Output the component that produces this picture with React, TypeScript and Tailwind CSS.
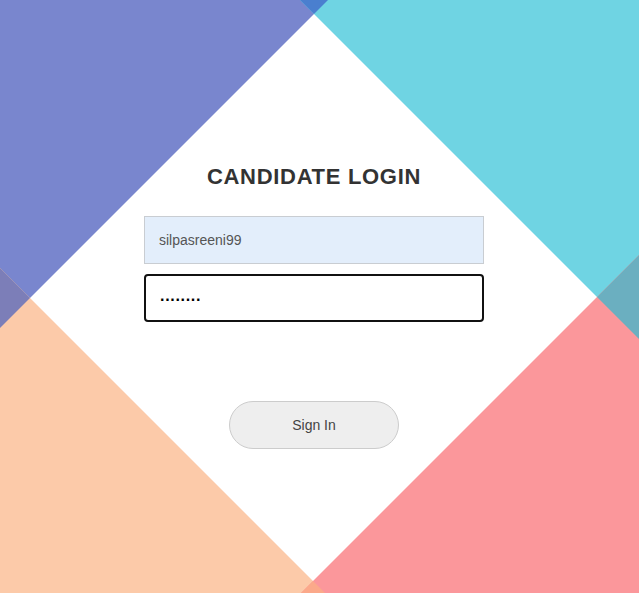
import { useState } from 'react'

function Backdrop() {
  return (
    <svg
      className="absolute inset-0"
      width="639"
      height="593"
      viewBox="0 0 639 593"
      aria-hidden
    >
      {/* corner triangles */}
      <polygon points="0,0 328,0 0,328" fill="#7986CE" />
      <polygon points="300,0 639,0 639,339" fill="#6FD4E3" />
      <polygon points="0,268 0,593 325,593" fill="#FCCAA9" />
      <polygon points="639,255 639,593 301,593" fill="#FB979B" />
      {/* overlaps */}
      <polygon points="300,0 328,0 314,14" fill="#4A7FCF" />
      <polygon points="0,268 30,298 0,328" fill="#7C7EB8" />
      <polygon points="639,255 597,297 639,339" fill="#6BAFC0" />
      <polygon points="301,593 313,581 325,593" fill="#FBA98A" />
    </svg>
  )
}

export default function App() {
  const [username, setUsername] = useState('silpasreeni99')

  return (
    <div className="relative w-[639px] h-[593px] overflow-hidden bg-white font-['Liberation_Sans',Arial,sans-serif]">
      <Backdrop />

      <div className="relative flex flex-col items-center pr-[11px] pt-[164px]">
        <h1 className="text-[22px] leading-[26px] font-bold tracking-[0.7px] text-[#333]">
          CANDIDATE LOGIN
        </h1>

        <form className="flex flex-col items-center mt-[26px]" onSubmit={(e) => e.preventDefault()}>
          <input
            type="text"
            value={username}
            onChange={(e) => setUsername(e.target.value)}
            className="w-[340px] h-12 px-[14px] bg-[#E3EEFB] border border-[#C9CDD2] text-[14px] text-[#555] outline-none"
          />
          <div className="mt-[10px] w-[340px] h-12 flex items-center px-[14px] bg-white border-2 border-[#111] rounded-[4px]">
            <span className="pt-[3px] text-[16px] leading-none font-bold text-black tracking-[-0.2px]">········</span>
          </div>

          <button
            type="submit"
            className="mt-[79px] w-[170px] h-12 rounded-full bg-[#EEEEEE] border border-[#CCCCCC] text-[14px] text-[#444]"
          >
            Sign In
          </button>
        </form>
      </div>
    </div>
  )
}
